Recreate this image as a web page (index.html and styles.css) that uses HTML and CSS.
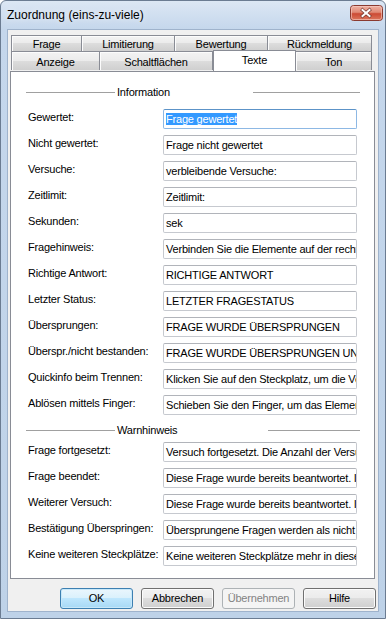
FILE: index.html
```html
<!DOCTYPE html>
<html lang="de">
<head>
    <meta charset="UTF-8">
    <meta name="viewport" content="width=device-width, initial-scale=1.0">
    <title>Zuordnung (eins-zu-viele)</title>
    <link rel="stylesheet" href="styles.css">
</head>
<body>

    <div class="window">
        <div class="titlebar">
            <span class="title">Zuordnung (eins-zu-viele)</span>
            <svg class="close" width="33" height="16" viewBox="0 0 33 16">
                <defs>
                    <linearGradient id="closeGrad" x1="0" y1="0" x2="0" y2="1">
                        <stop offset="0" stop-color="#f0b4a6"/>
                        <stop offset="0.45" stop-color="#e08a76"/>
                        <stop offset="0.55" stop-color="#cc4a34"/>
                        <stop offset="1" stop-color="#dd7a60"/>
                    </linearGradient>
                </defs>
                <rect x="0.5" y="0.5" width="32" height="15" rx="3" fill="url(#closeGrad)" stroke="#8a3a30"/>
                <rect x="1.5" y="1.5" width="30" height="13" rx="2" fill="none" stroke="#f6cfc6" stroke-opacity="0.6"/>
                <path d="M12.5 5 L19.5 11 M19.5 5 L12.5 11" stroke="#7a3c34" stroke-width="3.4" stroke-linecap="square" fill="none"/>
                <path d="M12.5 5 L19.5 11 M19.5 5 L12.5 11" stroke="#ffffff" stroke-width="2" stroke-linecap="square" fill="none"/>
            </svg>
        </div>

        <div class="client">
            <div class="tabs">
                <div class="tab-row">
                    <div class="tab t-frage">Frage</div>
                    <div class="tab t-limit">Limitierung</div>
                    <div class="tab t-bewertung">Bewertung</div>
                    <div class="tab t-rueck">Rückmeldung</div>
                </div>
                <div class="tab-row front">
                    <div class="tab t-anzeige">Anzeige</div>
                    <div class="tab t-schalt">Schaltflächen</div>
                    <div class="tab t-texte active">Texte</div>
                    <div class="tab t-ton">Ton</div>
                </div>
            </div>

            <div class="panel">
                <div class="section">
                    <span class="line line-left"></span>
                    <span class="section-text">Information</span>
                    <span class="line"></span>
                </div>
                <div class="row"><label>Gewertet:</label><div class="textbox focused"><span class="sel">Frage gewertet</span></div></div>
                <div class="row"><label>Nicht gewertet:</label><div class="textbox">Frage nicht gewertet</div></div>
                <div class="row"><label>Versuche:</label><div class="textbox">verbleibende Versuche:</div></div>
                <div class="row"><label>Zeitlimit:</label><div class="textbox">Zeitlimit:</div></div>
                <div class="row"><label>Sekunden:</label><div class="textbox">sek</div></div>
                <div class="row"><label>Fragehinweis:</label><div class="textbox">Verbinden Sie die Elemente auf der rechten Seite mit den passenden Steckplätzen.</div></div>
                <div class="row"><label>Richtige Antwort:</label><div class="textbox">RICHTIGE ANTWORT</div></div>
                <div class="row"><label>Letzter Status:</label><div class="textbox">LETZTER FRAGESTATUS</div></div>
                <div class="row"><label>Übersprungen:</label><div class="textbox">FRAGE WURDE ÜBERSPRUNGEN</div></div>
                <div class="row"><label>Überspr./nicht bestanden:</label><div class="textbox">FRAGE WURDE ÜBERSPRUNGEN UND NICHT BESTANDEN</div></div>
                <div class="row"><label>Quickinfo beim Trennen:</label><div class="textbox">Klicken Sie auf den Steckplatz, um die Verbindung zu trennen.</div></div>
                <div class="row"><label>Ablösen mittels Finger:</label><div class="textbox">Schieben Sie den Finger, um das Element abzulösen.</div></div>

                <div class="section section-warn">
                    <span class="line line-left"></span>
                    <span class="section-text">Warnhinweis</span>
                    <span class="line"></span>
                </div>
                <div class="row"><label>Frage fortgesetzt:</label><div class="textbox">Versuch fortgesetzt. Die Anzahl der Versuche wurde verringert.</div></div>
                <div class="row"><label>Frage beendet:</label><div class="textbox">Diese Frage wurde bereits beantwortet. Ihre Antwort wurde gespeichert.</div></div>
                <div class="row"><label>Weiterer Versuch:</label><div class="textbox">Diese Frage wurde bereits beantwortet. Ihre Antwort wurde gespeichert.</div></div>
                <div class="row"><label>Bestätigung Überspringen:</label><div class="textbox">Übersprungene Fragen werden als nicht beantwortet gewertet.</div></div>
                <div class="row"><label>Keine weiteren Steckplätze:</label><div class="textbox">Keine weiteren Steckplätze mehr in dieser Frage.</div></div>
            </div>

            <div class="buttons">
                <button class="btn default">OK</button>
                <button class="btn">Abbrechen</button>
                <button class="btn" disabled>Übernehmen</button>
                <button class="btn">Hilfe</button>
            </div>
        </div>
    </div>

</body>
</html>
```

FILE: styles.css
```css
* {
    box-sizing: border-box;
}
body {
    margin: 0;
    background: #ffffff;
    font-family: "Liberation Sans", Arial, sans-serif;
    font-size: 11px;
    letter-spacing: -0.2px;
    color: #000;
}
.window {
    width: 386px;
    height: 619px;
    display: flex;
    flex-direction: column;
    border: 1px solid #6b7c92;
    border-radius: 6px 6px 0 0;
    background: linear-gradient(#dce7f4, #c5d7ec 28px, #bed2e8);
}
.titlebar {
    height: 28px;
    display: flex;
    justify-content: space-between;
    align-items: flex-start;
}
.title {
    font-size: 12px;
    letter-spacing: 0;
    line-height: 27px;
    padding: 1px 0 0 6px;
    text-shadow: 0 0 6px rgba(255, 255, 255, 0.9);
}
.close {
    flex: none;
    margin: 4px 2px 0 0;
}
.client {
    flex: 1;
    margin: 0 6px 6px 6px;
    border: 1px solid #9fb3cc;
    background: #f0f0f0;
    display: flex;
    flex-direction: column;
}
.tabs {
    margin: 5px 0 0 3px;
    width: 361px;
}
.tab-row {
    display: flex;
    align-items: flex-start;
}
.tab {
    border: 1px solid #898c95;
    border-bottom: none;
    border-left: none;
    background: linear-gradient(#f3f3f3, #ebebeb 50%, #dddddd 50%, #cfcfcf);
    box-shadow: inset 1px 1px 0 #fcfcfc;
    text-align: center;
    padding-top: 1px;
    line-height: 14px;
    height: 16px;
}
.tab:first-child {
    border-left: 1px solid #898c95;
}
.front .tab {
    padding-top: 2px;
    line-height: 16px;
    height: 19px;
}
.front .tab.active {
    position: relative;
    z-index: 1;
    margin-top: -1px;
    height: 21px;
    padding-top: 1px;
    border-left: 1px solid #898c95;
    background: #ffffff;
    box-shadow: none;
}
.t-frage { width: 71px; }
.t-limit { width: 93px; }
.t-bewertung { width: 93px; }
.t-rueck { width: 104px; }
.t-anzeige { width: 89px; }
.t-schalt { width: 113px; }
.t-texte { width: 83px; }
.t-ton { width: 76px; }

.panel {
    margin: 0 3px 0 2px;
    border: 1px solid #898c95;
    background: #ffffff;
    padding: 13px 0 12px 0;
    display: flex;
    flex-direction: column;
    gap: 6px;
}
.section {
    display: flex;
    align-items: center;
    height: 14px;
    line-height: 14px;
    padding-right: 14px;
    margin-bottom: 4px;
}
.section-warn {
    margin-top: 2px;
    margin-bottom: -1px;
}
.line {
    flex: 1;
    border-top: 1px solid #a0a0a0;
    margin-top: 1px;
}
.line-left {
    flex: none;
    width: 89px;
    margin-left: 15px;
}
.section-text {
    width: 138px;
    padding-left: 2px;
}
.section-warn .section-text {
    width: 153px;
}
.row {
    display: flex;
    align-items: flex-start;
    height: 20px;
    padding-left: 17px;
}
.row label {
    width: 135px;
    line-height: 16px;
    white-space: nowrap;
}
.textbox {
    width: 194px;
    height: 20px;
    border: 1px solid #c6c9cf;
    border-top-color: #b1b4ba;
    border-radius: 2px;
    padding: 0 2px;
    line-height: 18px;
    white-space: nowrap;
    overflow: hidden;
    background: #fff;
}
.textbox.focused {
    border-color: #8db8e4;
    border-top-color: #5c93c8;
}
.sel {
    background: #3399ff;
    color: #fff;
}
.buttons {
    display: flex;
    justify-content: flex-end;
    gap: 8px;
    margin-top: 9px;
    padding-right: 2px;
}
.btn {
    width: 73px;
    height: 21px;
    padding: 0;
    font-family: "Liberation Sans", Arial, sans-serif;
    font-size: 11px;
    letter-spacing: -0.2px;
    line-height: 19px;
    color: #000;
    border: 1px solid #707070;
    border-radius: 3px;
    background: linear-gradient(#f2f2f2, #ebebeb 50%, #dddddd 50%, #cfcfcf);
    box-shadow: inset 0 0 0 1px #fbfbfb;
}
.btn.default {
    border-color: #3c7fb1;
    background: linear-gradient(#eaf6fd, #d9f0fc 50%, #bee6fd 50%, #a7d9f5);
    box-shadow: inset 0 0 0 1px #c8e8f9;
}
.btn:disabled {
    border-color: #adb2b5;
    background: #f4f4f4;
    color: #838383;
    box-shadow: none;
}
```
